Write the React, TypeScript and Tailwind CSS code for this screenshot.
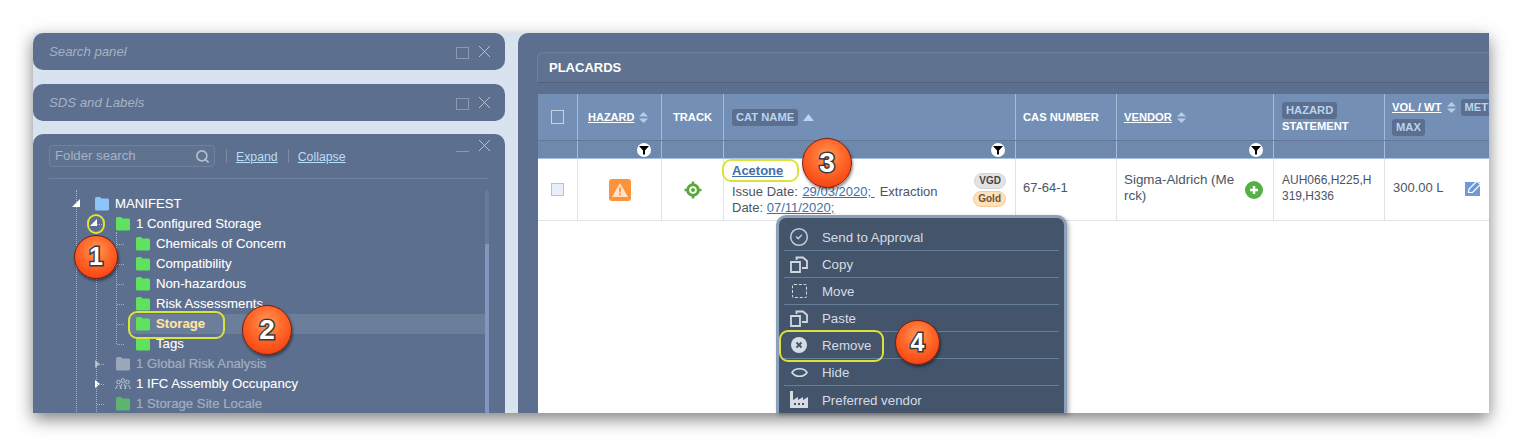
import React from 'react'
import { Search, CircleCheck } from 'lucide-react'

const Folder = ({ color = '#5fe35f', dim = false }: { color?: string; dim?: boolean }) => (
    <svg width="16" height="15" viewBox="0 0 16 15" className={dim ? 'shrink-0 opacity-60' : 'shrink-0'}>
        <path d="M1 2.500Q1 1 2.500 1H6L7.500 2.500H13.500Q15 2.500 15 4V13Q15 14.500 13.500 14.500H2.500Q1 14.500 1 13Z" fill={color} />
    </svg>
)

const Funnel = () => (
    <span className="flex h-[14px] w-[14px] items-center justify-center rounded-full bg-white">
        <svg width="10" height="10" viewBox="0 0 10 10">
            <path d="M0 1H10L6 5.500V9.500H4V5.500Z" fill="#000" />
        </svg>
    </span>
)

const Sort = () => (
    <svg width="9" height="11" viewBox="0 0 9 11" className="shrink-0">
        <path d="M4.500 0L9 4.500H0Z M0 6.500H9L4.500 11Z" fill="#b6cde8" />
    </svg>
)

const Tag = ({ children }: { children: React.ReactNode }) => (
    <span className="inline-block rounded-[3px] bg-[#5c6f8e] px-1 leading-[17px] text-[#b9d4f2]">{children}</span>
)

const WindowButtons = ({ minimized }: { minimized?: boolean }) => (
    <div className="flex items-center gap-[10px]">
        {minimized ? (
            <span className="mt-[12px] h-px w-[13px] bg-[#8a99b1]" />
        ) : (
            <span className="mt-[2px] h-[12px] w-[13px] border border-[#8a99b1]" />
        )}
        <svg width="11" height="11" viewBox="0 0 11 11" fill="none" stroke="#b5c0d0">
            <path d="M0 0L11 11M11 0L0 11" />
        </svg>
    </div>
)

const SidePanel = ({ title }: { title: string }) => (
    <div className="flex h-[37px] shrink-0 items-center justify-between rounded-[10px] bg-[#5c6f8e] pl-4 pr-[15px]">
        <span className="text-[13.200px] italic text-[#a5b2c6]">{title}</span>
        <WindowButtons />
    </div>
)

const TreeRow = ({
    level,
    label,
    color,
    dim,
    className = 'text-white',
    hi,
    icon,
}: {
    level: number
    label: string
    color?: string
    dim?: boolean
    className?: string
    hi?: boolean
    icon?: React.ReactNode
}) => {
    const pad = level === 0 ? 'pl-[61px]' : level === 1 ? 'pl-[82px]' : 'pl-[102px]'
    return (
        <div className={`relative flex h-5 items-center gap-[5px] ${pad}`}>
            {hi && <div className="absolute inset-y-0 left-[97px] right-0 bg-[#6b7e9a]" />}
            {level === 1 && <div className="absolute left-[64px] top-[10px] w-[7px] border-t border-dotted border-[#a5b2c6]" />}
            {level === 2 && <div className="absolute left-[84px] top-[10px] w-[7px] border-t border-dotted border-[#a5b2c6]" />}
            <span className="relative flex items-center gap-[5px]">
                {icon ?? <Folder color={color} dim={dim} />}
                <span className={`text-[13.200px] whitespace-nowrap [text-shadow:0_0_1px_rgba(255,255,255,0.25)] ${className}`}>{label}</span>
            </span>
        </div>
    )
}

const People = () => (
    <svg width="16" height="12" viewBox="0 0 16 12" className="shrink-0" fill="none" stroke="#b9c4d3" strokeWidth="1">
        <circle cx="3.500" cy="4" r="1.800" />
        <circle cx="8" cy="2.500" r="1.800" />
        <circle cx="12.500" cy="4" r="1.800" />
        <path d="M0.500 11L2.500 7M6.500 11L4.500 7M5 11L7 5.500M11 11L9 5.500M9.500 11L11.500 7M15.500 11L13.500 7" />
    </svg>
)

const MenuItem = ({ icon, label, last }: { icon: React.ReactNode; label: string; last?: boolean }) => (
    <div className={`mx-[5px] flex h-[27px] items-center ${last ? '' : 'border-b border-[#64809a]'}`}>
        <span className="flex w-[30px] justify-center">{icon}</span>
        <span className="ml-[8px] pt-[2px] text-[13.300px] text-[#d5dce6]">{label}</span>
    </div>
)

const CopyIcon = () => (
    <svg width="18" height="17" viewBox="0 0 18 17" fill="none" stroke="#d0d7e1" strokeWidth="1.800">
        <path d="M1 6H10V16H1Z" />
        <path d="M6.500 4V1.500H13L17 5V12H12" />
    </svg>
)

const Badge = ({ n, className }: { n: number; className: string }) => (
    <div
        className={`absolute flex items-center justify-center rounded-full border border-[#7c1c0c] bg-[radial-gradient(circle_at_50%_35%,#ff9a5c_0%,#ff6a2c_40%,#f5400f_85%,#c92b08_100%)] font-['Liberation_Sans',sans-serif] font-bold text-white shadow-[1px_2px_3px_rgba(0,0,0,0.45)] [-webkit-text-stroke:3px_#3a3a3a] [paint-order:stroke_fill] ${className}`}
    >
        {n}
    </div>
)

const th = 'flex items-center border-r border-[#a5bbd8] px-2'
const cols = 'grid-cols-[40px_84px_62px_292px_101px_157px_111px_1fr]'

export default function App() {
    return (
        <div className="relative h-[445px] w-[1521px] overflow-hidden bg-white pl-[33px] pt-[33px] font-['Liberation_Sans',sans-serif]">
            <div className="flex h-[380px] w-[1456px] overflow-hidden bg-[#d9e3ef] shadow-[0_6px_16px_rgba(0,0,0,0.5)]">
                <div className="flex w-[472px] shrink-0 flex-col">
                    <SidePanel title="Search panel" />
                    <div className="mt-[14px] shrink-0">
                        <SidePanel title="SDS and Labels" />
                    </div>
                    <div className="mt-[13px] min-h-0 flex-1 overflow-hidden rounded-t-[10px] bg-[#5c6f8e]">
                        <div className="mx-4 flex h-[45px] items-start border-b border-[#6f819d] pt-[11px]">
                            <div className="flex h-[22px] w-[166px] items-center justify-between rounded-[4px] border border-[#6f819d] bg-[#5f7391] pl-[5px] pr-[4px]">
                                <span className="text-[13.200px] text-[#a5b2c6]">Folder search</span>
                                <Search size={15} strokeWidth={2.500} className="text-[#b5c0d0]" />
                            </div>
                            <div className="ml-[11px] mt-[4px] h-[14px] w-px bg-[#7b8ca6]" />
                            <span className="ml-[9px] mt-[3px] text-[12.300px] text-[#b9def8] underline">Expand</span>
                            <div className="ml-[10px] mt-[4px] h-[14px] w-px bg-[#7b8ca6]" />
                            <span className="ml-[9px] mt-[3px] text-[12.300px] text-[#b9def8] underline">Collapse</span>
                            <div className="ml-auto mr-[-1px] mt-[-6px]">
                                <WindowButtons minimized />
                            </div>
                        </div>
                        <div className="relative mt-[15px] h-[220px]">
                            <div className="absolute bottom-0 left-[43px] top-[-4px] border-l border-dotted border-[#a5b2c6]" />
                            <div className="absolute bottom-0 left-[63px] top-[38px] border-l border-dotted border-[#a5b2c6]" />
                            <div className="absolute left-[83px] top-[38px] h-[112px] border-l border-dotted border-[#a5b2c6]" />
                            <svg width="8" height="8" viewBox="0 0 8 8" className="absolute left-[39px] top-[5px]">
                                <path d="M0 8L8 0V8Z" fill="#fff" />
                            </svg>
                            <svg width="7" height="7" viewBox="0 0 7 7" className="absolute left-[57px] top-[25px]">
                                <path d="M0 7L7 0V7Z" fill="#fff" />
                            </svg>
                            <svg width="5" height="8" viewBox="0 0 5 8" className="absolute left-[62px] top-[166px] opacity-50">
                                <path d="M0 0L5 4L0 8Z" fill="#fff" />
                            </svg>
                            <svg width="5" height="8" viewBox="0 0 5 8" className="absolute left-[62px] top-[186px]">
                                <path d="M0 0L5 4L0 8Z" fill="#fff" />
                            </svg>
                            <div className="absolute left-[452px] top-[-4px] h-[54px] w-1 rounded-t-sm bg-[#677b9a]" />
                            <div className="absolute left-[452px] top-[50px] h-[180px] w-1 bg-[#8098bd]" />
                            <div className="w-[452px]">
                                <TreeRow level={0} label="MANIFEST" color="#8fc4fb" />
                                <TreeRow level={1} label="1 Configured Storage" />
                                <TreeRow level={2} label="Chemicals of Concern" />
                                <TreeRow level={2} label="Compatibility" />
                                <TreeRow level={2} label="Non-hazardous" />
                                <TreeRow level={2} label="Risk Assessments" />
                                <TreeRow level={2} label="Storage" hi className="font-bold text-[#ffe3a0]" />
                                <TreeRow level={2} label="Tags" />
                                <TreeRow level={1} label="1 Global Risk Analysis" color="#c4ccd8" dim className="text-[#a0adc0]" />
                                <TreeRow level={1} label="1 IFC Assembly Occupancy" icon={<People />} />
                                <TreeRow level={1} label="1 Storage Site Locale" color="#5fe35f" dim className="text-[#a0adc0]" />
                            </div>
                        </div>
                    </div>
                </div>
                <div className="ml-[13px] flex-1 overflow-hidden rounded-tl-[10px] bg-[#5c6f8e] pl-[19px] pt-[19px]">
                    <div className="flex h-[31px] w-[1000px] items-center rounded-tl-[6px] border-b border-l border-t border-b-[#4f6080] border-l-[#6f819d] border-t-[#6f819d] bg-[#5f7391] pl-[11px] text-[13px] font-bold text-white">
                        PLACARDS
                    </div>
                    <div className="ml-px mt-[11px] h-[400px] w-[1000px] bg-white">
                        <div className={`grid h-[46px] ${cols} bg-[#748fb5] text-[11px] font-bold text-white`}>
                            <div className={`${th} justify-center`}>
                                <span className="h-[14px] w-[13px] border border-[#c5d3e4]" />
                            </div>
                            <div className={`${th} gap-[5px] pl-[10px] underline`}>
                                HAZARD <Sort />
                            </div>
                            <div className={`${th} justify-center text-[11.200px]`}>TRACK</div>
                            <div className={`${th} gap-[5px] text-[11.200px]`}>
                                <Tag>CAT NAME</Tag>
                                <svg width="11" height="7" viewBox="0 0 11 7">
                                    <path d="M5.500 0L11 7H0Z" fill="#b9d4f2" />
                                </svg>
                            </div>
                            <div className={`${th} !px-[7px] text-[11.200px]`}>CAS NUMBER</div>
                            <div className={`${th} gap-[5px] !px-[7px] text-[11.200px] underline`}>
                                VENDOR <Sort />
                            </div>
                            <div className={`${th} flex-col items-start justify-center text-[11.200px] leading-[14px]`}>
                                <Tag>HAZARD</Tag>
                                <span>STATEMENT</span>
                            </div>
                            <div className="flex flex-wrap content-center items-center gap-x-[5px] gap-y-[3px] pl-[7px] text-[11.200px]">
                                <span className="underline">VOL / WT</span>
                                <Sort />
                                <Tag>METRIC</Tag>
                                <Tag>MAX</Tag>
                            </div>
                        </div>
                        <div className={`grid h-[19px] ${cols} border-y border-b-[#a5c0e0] border-t-[#61789b] bg-[#6f89ac]`}>
                            <div className="border-r border-[#a5bbd8]" />
                            <div className="flex items-center justify-end border-r border-[#a5bbd8] pr-[10px]">
                                <Funnel />
                            </div>
                            <div className="border-r border-[#a5bbd8]" />
                            <div className="flex items-center justify-end border-r border-[#a5bbd8] pr-[10px]">
                                <Funnel />
                            </div>
                            <div className="border-r border-[#a5bbd8]" />
                            <div className="flex items-center justify-end border-r border-[#a5bbd8] pr-[10px]">
                                <Funnel />
                            </div>
                            <div className="border-r border-[#a5bbd8]" />
                            <div />
                        </div>
                        <div className={`grid h-[62px] ${cols} border-b border-[#e0e3e8] text-[13px] text-[#4a5566]`}>
                            <div className="flex items-center justify-center border-r border-[#e0e3e8]">
                                <span className="h-[13px] w-[13px] border border-[#b5c3d6] bg-[#e8eff8]" />
                            </div>
                            <div className="flex items-center justify-center border-r border-[#e0e3e8]">
                                <span className="flex h-[22px] w-[22px] items-center justify-center rounded-[3px] bg-[#fb923c]">
                                    <svg width="16" height="14" viewBox="0 0 16 14">
                                        <path d="M8 0L16 14H0Z" fill="#ffe2c8" />
                                        <rect x="7.100" y="4.500" width="1.800" height="5" fill="#fb923c" />
                                        <rect x="7.100" y="10.500" width="1.800" height="1.800" fill="#fb923c" />
                                    </svg>
                                </span>
                            </div>
                            <div className="flex items-center justify-center border-r border-[#e0e3e8]">
                                <svg width="18" height="18" viewBox="0 0 18 18" fill="none" stroke="#5aa83c">
                                    <circle cx="9" cy="9" r="5.300" strokeWidth="3" />
                                    <circle cx="9" cy="9" r="2" fill="#5aa83c" strokeWidth="0" />
                                    <path d="M9 0.500V3M9 15V17.500M0.500 9H3M15 9H17.500" strokeWidth="2.500" />
                                </svg>
                            </div>
                            <div className="flex items-start justify-between border-r border-[#e0e3e8] pl-2 pr-[9px] pt-[3px]">
                                <div className="leading-4">
                                    <a className="mb-[4px] block font-bold leading-[18px] text-[#3f6fa8] underline">Acetone</a>
                                    <div className="flex whitespace-pre">
                                        <span>Issue Date: </span>
                                        <span className="ml-[1px] text-[#3f6fa8] underline">29/03/2020; </span>
                                        <span className="ml-[5px]">Extraction</span>
                                    </div>
                                    <div className="flex whitespace-pre">
                                        <span>Date: </span>
                                        <span className="text-[#3f6fa8] underline">07/11/2020;</span>
                                    </div>
                                </div>
                                <div className="mt-[11px] flex flex-col items-end gap-[2px] text-[10px] font-bold leading-[14px]">
                                    <span className="rounded-full border border-[#d5d5d5] bg-[#e3e3e3] px-1 text-[#444]">VGD</span>
                                    <span className="rounded-full border border-[#fbc99a] bg-[#fde0bc] px-1 text-[#6b5333]">Gold</span>
                                </div>
                            </div>
                            <div className="flex items-center border-r border-[#e0e3e8] pb-[3px] pl-[7px]">67-64-1</div>
                            <div className="flex items-center justify-between border-r border-[#e0e3e8] pl-[7px] pr-[10px] leading-4">
                                <span className="mb-[3px] w-[112px] break-all text-[13.400px]">Sigma-Aldrich (Merck)</span>
                                <svg width="18" height="18" viewBox="0 0 18 18">
                                    <circle cx="9" cy="9" r="9" fill="#55b045" />
                                    <path d="M9 5V13M5 9H13" stroke="#fff" strokeWidth="2.500" />
                                </svg>
                            </div>
                            <div className="flex items-center border-r border-[#e0e3e8] pb-[3px] pl-2 text-[12px] leading-4">
                                <span className="w-[92px] break-all">AUH066,H225,H319,H336</span>
                            </div>
                            <div className="flex items-center pb-[3px] pl-2">
                                <span>300.00 L</span>
                                <svg width="16" height="16" viewBox="0 0 16 16" className="ml-[21px]">
                                    <path d="M0 2H15V16H0Z" fill="#6f9ad6" />
                                    <path d="M3.500 12.500L4 9L12 1L15.500 4.500L7.500 12.500Z" fill="#6f9ad6" stroke="#fff" strokeWidth="1.200" />
                                </svg>
                            </div>
                        </div>
                    </div>
                </div>
            </div>

            <div className="absolute left-[776px] top-[215px] h-[198px] w-[291px] rounded-t-[10px] border-[3px] border-b-0 border-[#8ba0b9] bg-[#44546a] pt-[6px] shadow-[2px_2px_4px_rgba(0,0,0,0.3)]">
                <MenuItem icon={<CircleCheck size={20} strokeWidth={1.800} className="text-[#c5ccd7]" />} label="Send to Approval" />
                <MenuItem icon={<CopyIcon />} label="Copy" />
                <MenuItem icon={<span className="h-[14px] w-[15px] rounded-[2px] border border-dashed border-[#d5dce6]" />} label="Move" />
                <MenuItem icon={<CopyIcon />} label="Paste" />
                <MenuItem
                    icon={
                        <svg width="16" height="16" viewBox="0 0 16 16">
                            <circle cx="8" cy="8" r="8" fill="#d5dce6" />
                            <path d="M5.500 5.500L10.500 10.500M10.500 5.500L5.500 10.500" stroke="#44546a" strokeWidth="1.800" />
                        </svg>
                    }
                    label="Remove"
                />
                <MenuItem
                    icon={
                        <svg width="17" height="11" viewBox="0 0 17 11" fill="none" stroke="#d5dce6" strokeWidth="1.600">
                            <path d="M1 5.500C4 0.500 13 0.500 16 5.500C13 10.500 4 10.500 1 5.500Z" />
                        </svg>
                    }
                    label="Hide"
                />
                <MenuItem
                    last
                    icon={
                        <svg width="18" height="17" viewBox="0 0 18 17">
                            <path d="M0 0H3V9L8 6V9L13 6V9L18 6V17H0Z" fill="#d5dce6" />
                            <path d="M4 12H6V14H4ZM8 12H10V14H8ZM12 12H14V14H12Z" fill="#44546a" />
                        </svg>
                    }
                    label="Preferred vendor"
                />
            </div>

            <div className="absolute left-[87px] top-[214px] h-[20px] w-[18px] rounded-full border-2 border-[#dbe33a]" />
            <div className="absolute left-[128px] top-[311px] h-[28px] w-[97px] rounded-[9px] border-2 border-[#dbe33a]" />
            <div className="absolute left-[722px] top-[159px] h-[23px] w-[77px] rounded-[9px] border-2 border-[#dbe33a]" />
            <div className="absolute left-[779px] top-[330px] h-[32px] w-[105px] rounded-[9px] border-2 border-[#dbe33a]" />

            <Badge n={1} className="left-[74px] top-[235px] h-[44px] w-[44px] text-[25px]" />
            <Badge n={2} className="left-[242px] top-[305px] h-[50px] w-[50px] text-[28px]" />
            <Badge n={3} className="left-[802px] top-[138px] h-[50px] w-[50px] text-[28px]" />
            <Badge n={4} className="left-[895px] top-[320px] h-[45px] w-[45px] text-[25px]" />
        </div>
    )
}
